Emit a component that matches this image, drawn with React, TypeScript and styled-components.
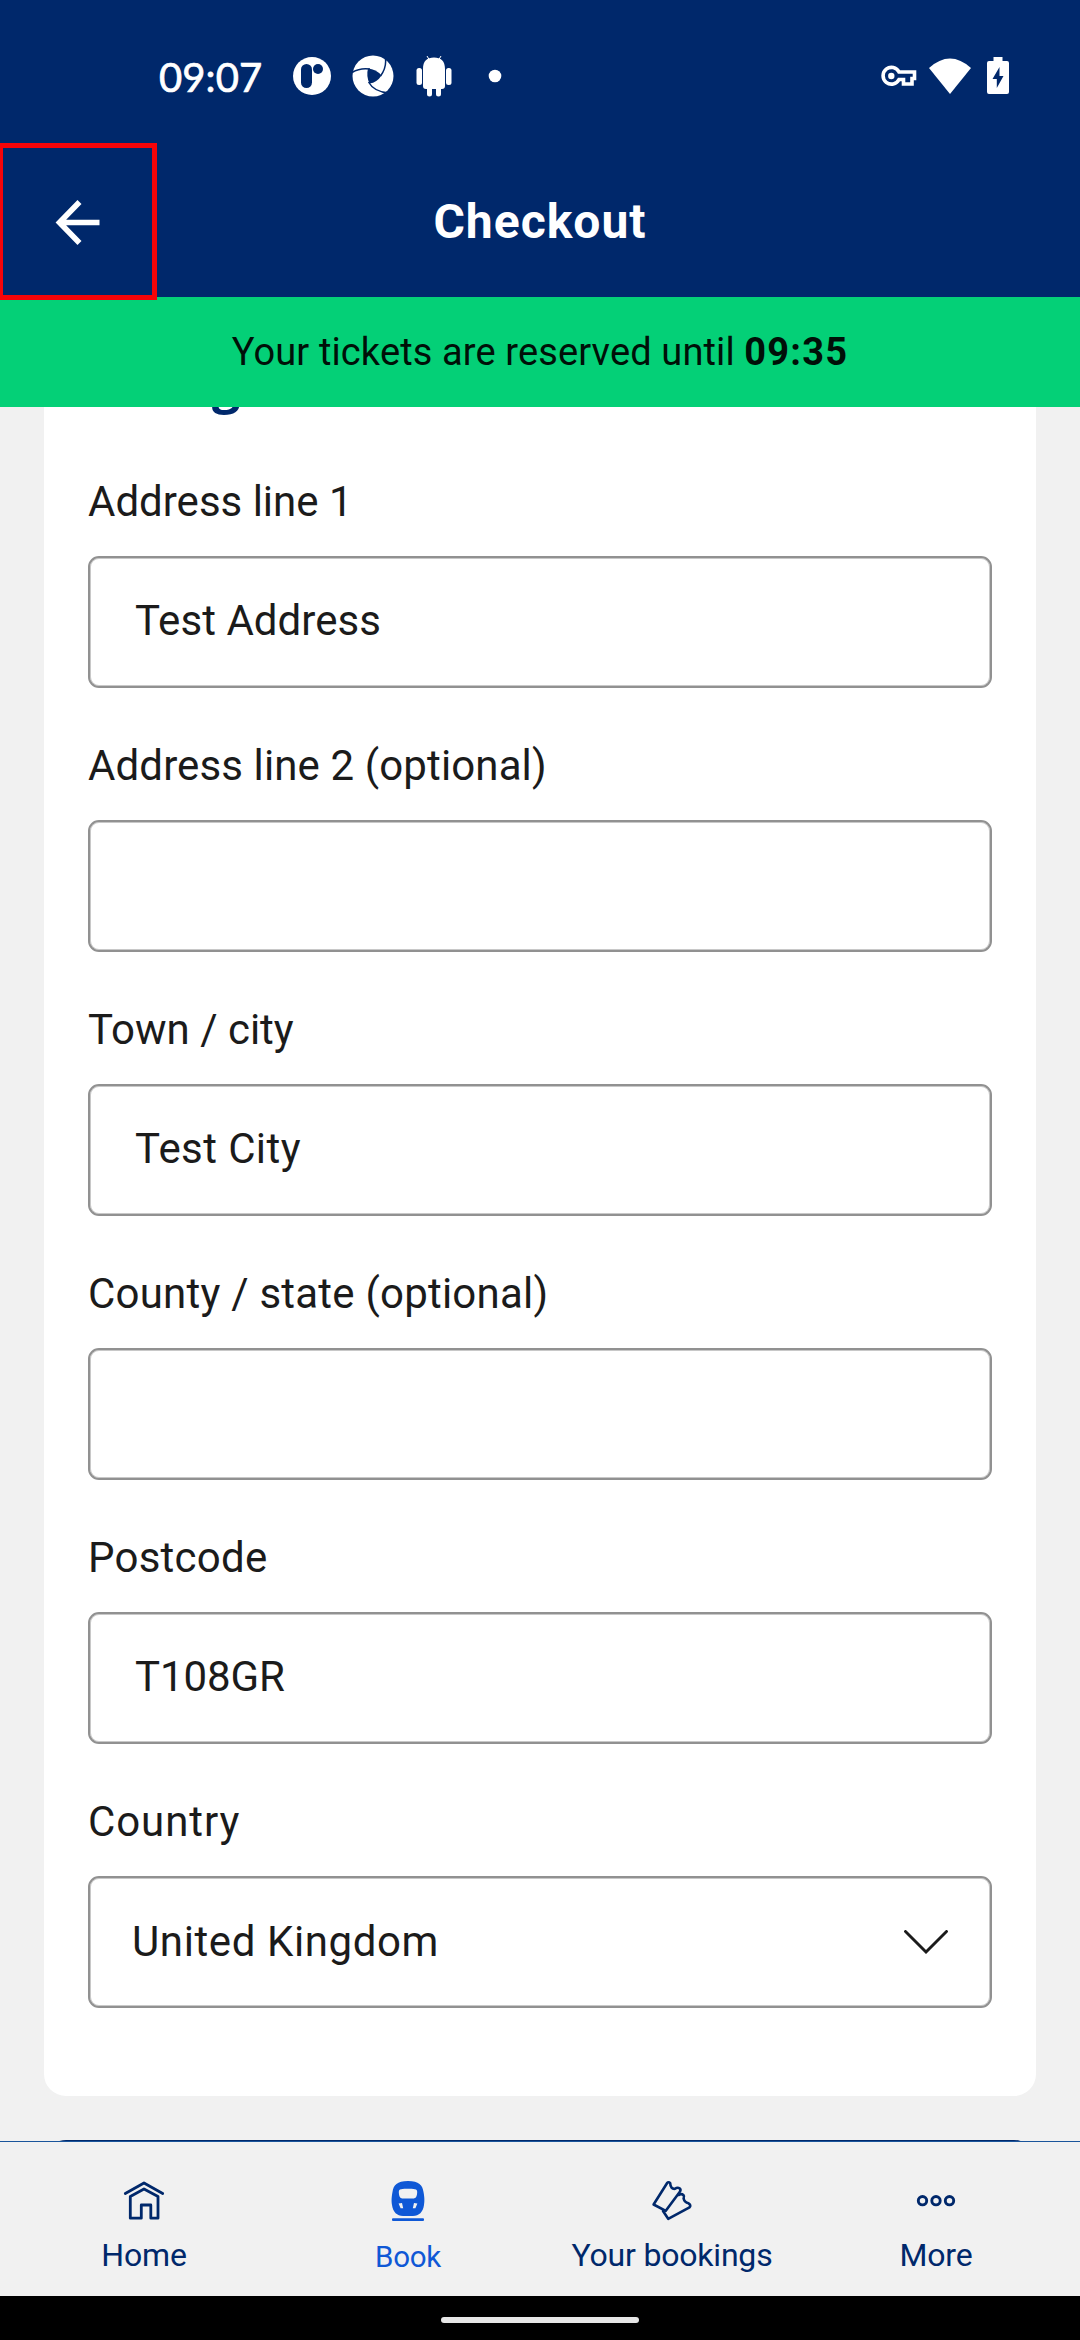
import React from "react";
import styled, { createGlobalStyle } from "styled-components";

const Global = createGlobalStyle`
  * { box-sizing: border-box; }
  html, body { margin: 0; padding: 0; background: #000; }
  input, button { font: inherit; margin: 0; }
`;

const SANS = `Roboto, "Liberation Sans", sans-serif`;

const Screen = styled.div`
  width: 1080px;
  height: 2340px;
  display: flex;
  flex-direction: column;
  overflow: hidden;
  background: #f1f1f1;
  font-family: ${SANS};
`;

const StatusBar = styled.div`
  flex: none;
  height: 143px;
  padding: 8px 71px 0 159px;
  display: flex;
  align-items: center;
  justify-content: space-between;
  background: #00286b;
  color: #fff;
`;

const StatusGroup = styled.div`
  display: flex;
  align-items: center;
`;

const Clock = styled.span`
  width: 134px;
  padding-top: 3px;
  font-family: Lato, sans-serif;
  font-size: 40px;
  line-height: 48px;
  letter-spacing: 0.1px;
  -webkit-text-stroke: 0.7px #fff;
`;

const StatusIcon = styled.svg<{ $ml: number }>`
  display: block;
  flex: none;
  margin-left: ${(p) => p.$ml}px;
`;

const Header = styled.header`
  flex: none;
  height: 154px;
  display: grid;
  grid-template-columns: 157px 1fr 157px;
  align-items: start;
  background: #00286b;
`;

const BackButton = styled.button`
  position: relative;
  z-index: 2;
  width: 157px;
  height: 157px;
  padding: 0;
  display: flex;
  align-items: center;
  justify-content: center;
  background: #00286b;
  border: 5px solid #f60408;
  border-left-width: 3px;
`;

const Title = styled.h1`
  margin: 0;
  padding-top: 49px;
  text-align: center;
  color: #fff;
  font-size: 48px;
  line-height: 60px;
  font-weight: 700;
  letter-spacing: 1px;
`;

const Notice = styled.div`
  flex: none;
  height: 110px;
  padding-bottom: 1px;
  display: flex;
  align-items: center;
  justify-content: center;
  background: #04d077;
  color: #001008;
  font-size: 38px;
  letter-spacing: 0.13px;
  white-space: pre;
`;

const NoticeTime = styled.b`
  letter-spacing: 1.2px;
`;

const Content = styled.main`
  flex: 1;
  min-height: 0;
  overflow: hidden;
  padding: 0 44px;
  display: flex;
  flex-direction: column;
`;

const Card = styled.section`
  flex: none;
  height: 1689px;
  padding: 0 44px;
  background: #fff;
  border-radius: 0 0 22px 22px;
  overflow: hidden;
`;

const CardTitle = styled.h2`
  margin: -61px 0 0;
  height: 133px;
  color: #00286b;
  font-family: "Open Sans", sans-serif;
  font-size: 50px;
  line-height: 76px;
  font-weight: 700;
  letter-spacing: -0.6px;
`;

const Field = styled.div`
  height: 264px;
  display: flex;
  flex-direction: column;
`;

const Label = styled.label<{ $spacing: number }>`
  height: 77px;
  line-height: 46px;
  color: #1b1b1b;
  font-size: 42px;
  letter-spacing: ${(p) => p.$spacing}px;
`;

const Box = styled.div<{ $select?: boolean; $spacing: number }>`
  height: 132px;
  padding: ${(p) => (p.$select ? "0 42px 1px 42px" : "0 44px 4px 45px")};
  display: flex;
  align-items: center;
  justify-content: space-between;
  border: 2px solid #919191;
  box-shadow: inset 0 0 0 1px #c8c8c8;
  border-radius: 11px;
  color: #1b1b1b;
  font-size: 42px;
  letter-spacing: ${(p) => p.$spacing}px;
`;

const NextButton = styled.div`
  flex: none;
  height: 132px;
  margin-top: 44px;
  background: #00286b;
  border-radius: 22px;
`;

const TabBar = styled.nav`
  flex: none;
  height: 155px;
  padding: 0 12px;
  display: grid;
  grid-template-columns: repeat(4, 264px);
  background: #f1f1f1;
  border-top: 1px solid #1a559b;
`;

const Tab = styled.div<{ $active?: boolean }>`
  display: flex;
  flex-direction: column;
  align-items: center;
  padding-top: 35px;
  color: ${(p) => (p.$active ? "#0f58d6" : "#00286b")};
`;

const TabLabel = styled.span<{ $active?: boolean }>`
  height: 40px;
  line-height: 40px;
  margin-top: ${(p) => (p.$active ? 16 : 14)}px;
  font-size: ${(p) => (p.$active ? 29.5 : 32)}px;
  letter-spacing: ${(p) => (p.$active ? -0.3 : -0.2)}px;
`;

const GestureBar = styled.div`
  flex: none;
  height: 44px;
  display: flex;
  align-items: center;
  justify-content: center;
  background: #000;
`;

const Pill = styled.div`
  width: 198px;
  height: 6px;
  margin-top: 4px;
  border-radius: 3px;
  background: #e6e6e6;
`;

const fields = [
  { label: "Address line 1", labelSpacing: 0, value: "Test Address", spacing: 0.05 },
  { label: "Address line 2 (optional)", labelSpacing: 0.12, value: "", spacing: 0 },
  { label: "Town / city", labelSpacing: 0, value: "Test City", spacing: 0.4 },
  { label: "County / state (optional)", labelSpacing: 0.22, value: "", spacing: 0 },
  { label: "Postcode", labelSpacing: 0.25, value: "T108GR", spacing: -0.1 },
];

const HomeIcon = () => (
  <svg width="44" height="44" viewBox="0 0 44 44" fill="none" stroke="currentColor" strokeWidth="2.8" strokeLinejoin="round" strokeLinecap="round">
    <path d="M3.300 16.500L22 6L40.700 16.500" />
    <path d="M8.300 19.500L22 12L36 19.500V41.200H28.800V28H19.300V41.200H8.300Z" />
  </svg>
);

const TrainIcon = () => (
  <svg width="44" height="44" viewBox="0 0 44 44">
    <path fill="currentColor" fillRule="evenodd" d="M22 4C33 4 36.500 8 37.500 15C38.600 21 38.600 24 38 28C37 35 33 39 27 39H17C11 39 7 35 6 28C5.400 24 5.400 21 6.500 15C7.500 8 11 4 22 4ZM15 12.300C13.500 12.500 12.800 13.500 12.800 15C13 19.500 14 21.500 17 21.500H27C30 21.500 31 19.500 31.200 15C31.200 13.500 30.500 12.500 29 12.300C25 11.700 19 11.700 15 12.300ZM12.600 26.500L14.600 31.200H17.200L16 26ZM31.400 26.500L29.400 31.200H26.800L28 26Z" />
    <rect x="6" y="41.300" width="32" height="2.600" rx="1" fill="currentColor" />
  </svg>
);

const TicketsIcon = () => (
  <svg width="44" height="44" viewBox="0 0 44 44" fill="none" stroke="currentColor" strokeWidth="2.600" strokeLinejoin="round" strokeLinecap="round">
    <path d="M15.800 33.800L3.600 27.500L17 6.200Q18.500 4.400 20.200 6.200Q20.500 12.300 25 11.800Q27.500 9.800 29.800 11.500Q31.300 13 29.500 15.200Z" />
    <path d="M28.500 18Q31.500 16.300 33.500 18.200Q34.600 19.500 33.600 21.500Q34.500 25.500 38.500 26.300Q41.500 28.200 39.500 30.300L18.200 41.800L13 34" />
  </svg>
);

const MoreIcon = () => (
  <svg width="44" height="44" viewBox="0 0 44 44" fill="none" stroke="currentColor" strokeWidth="2.900">
    <circle cx="8.500" cy="23.700" r="4.200" />
    <circle cx="22" cy="23.700" r="4.200" />
    <circle cx="35.500" cy="23.700" r="4.200" />
  </svg>
);

export default function App() {
  return (
    <Screen>
      <Global />
      <StatusBar>
        <StatusGroup>
          <Clock>09:07</Clock>
          <StatusIcon $ml={0} width="38" height="38" viewBox="0 0 38 38">
            <circle cx="19" cy="19" r="19" fill="#fff" />
            <rect x="8" y="7" width="11" height="24" rx="5.500" fill="#00286b" />
            <circle cx="25" cy="12" r="5" fill="#00286b" />
          </StatusIcon>
          <StatusIcon $ml={21} width="42" height="42" viewBox="0 0 42 42">
            <circle cx="21" cy="21" r="20.500" fill="#fff" />
            <path fill="#00286b" d="M16 13.500Q24 14 29.500 20.500Q25 27.500 17.500 28.500Q14 21 16 13.500Z" />
            <path fill="none" stroke="#00286b" strokeWidth="1.500" d="M0 17.500Q8 12.500 18 14M33.500 4Q34.500 13 28.500 21M16.500 27Q22 37 37 38" />
          </StatusIcon>
          <StatusIcon $ml={22} width="36" height="42" viewBox="0 0 36 42">
            <g fill="#fff">
              <path d="M7 14C7 6 11 2.500 18 2.500S29 6 29 14V31Q29 34 26 34H25V39Q25 41.500 22.500 41.500T20 39V34H16V39Q16 41.500 13.500 41.500T11 39V34H10Q7 34 7 31Z" />
              <rect x="0.500" y="13" width="5.500" height="17" rx="2.500" />
              <rect x="30" y="13" width="5.500" height="17" rx="2.500" />
            </g>
            <path d="M11 1L14 6M25 1L22 6" stroke="#fff" strokeWidth="1" />
          </StatusIcon>
          <StatusIcon $ml={36} width="14" height="14" viewBox="0 0 14 14">
            <circle cx="7" cy="7" r="6.300" fill="#fff" />
          </StatusIcon>
        </StatusGroup>
        <StatusGroup>
          <StatusIcon $ml={0} width="36" height="22" viewBox="0 0 36 22">
            <path fill="none" stroke="#fff" strokeWidth="3.600" d="M18 7H33.500V13.500H31V19H22.500V14.500H18A8.400 8.400 0 1 1 18 7Z" />
            <circle cx="10.300" cy="11" r="3.200" fill="#fff" />
          </StatusIcon>
          <StatusIcon $ml={12} width="42" height="36" viewBox="0 0 42 36">
            <path fill="#fff" d="M0 10Q21 -9 42 10L21 36Z" />
          </StatusIcon>
          <StatusIcon $ml={16} width="22" height="38" viewBox="0 0 22 38">
            <path fill="#fff" fillRule="evenodd" d="M6.500 0H15.500V4H20Q22 4 22 6V35Q22 37 20 37H2Q0 37 0 35V6Q0 4 2 4H6.500ZM12.500 10L5.500 22H9.800V31L16.500 19H12.500Z" />
          </StatusIcon>
        </StatusGroup>
      </StatusBar>
      <Header>
        <BackButton>
          <svg width="46" height="46" viewBox="0 0 46 46" fill="none" stroke="#fff" strokeWidth="5.600">
            <path d="M44.500 23.500H5M24.500 3L4.500 23.500L24.500 44" />
          </svg>
        </BackButton>
        <Title>Checkout</Title>
      </Header>
      <Notice>
        <span>Your tickets are reserved until <NoticeTime>09:35</NoticeTime></span>
      </Notice>
      <Content>
        <Card>
          <CardTitle>Billing address</CardTitle>
          {fields.map((f) => (
            <Field key={f.label}>
              <Label $spacing={f.labelSpacing}>{f.label}</Label>
              <Box $spacing={f.spacing}>{f.value}</Box>
            </Field>
          ))}
          <Field>
            <Label $spacing={0.9}>Country</Label>
            <Box $select $spacing={0.6}>
              United Kingdom
              <svg width="44" height="24" viewBox="0 0 44 24" fill="none" stroke="#1b1b1b" strokeWidth="2.900" strokeLinecap="round">
                <path d="M1.500 1.500L22 22L42.500 1.500" />
              </svg>
            </Box>
          </Field>
        </Card>
        <NextButton />
      </Content>
      <TabBar>
        <Tab><HomeIcon /><TabLabel>Home</TabLabel></Tab>
        <Tab $active><TrainIcon /><TabLabel $active>Book</TabLabel></Tab>
        <Tab><TicketsIcon /><TabLabel>Your bookings</TabLabel></Tab>
        <Tab><MoreIcon /><TabLabel>More</TabLabel></Tab>
      </TabBar>
      <GestureBar><Pill /></GestureBar>
    </Screen>
  );
}
